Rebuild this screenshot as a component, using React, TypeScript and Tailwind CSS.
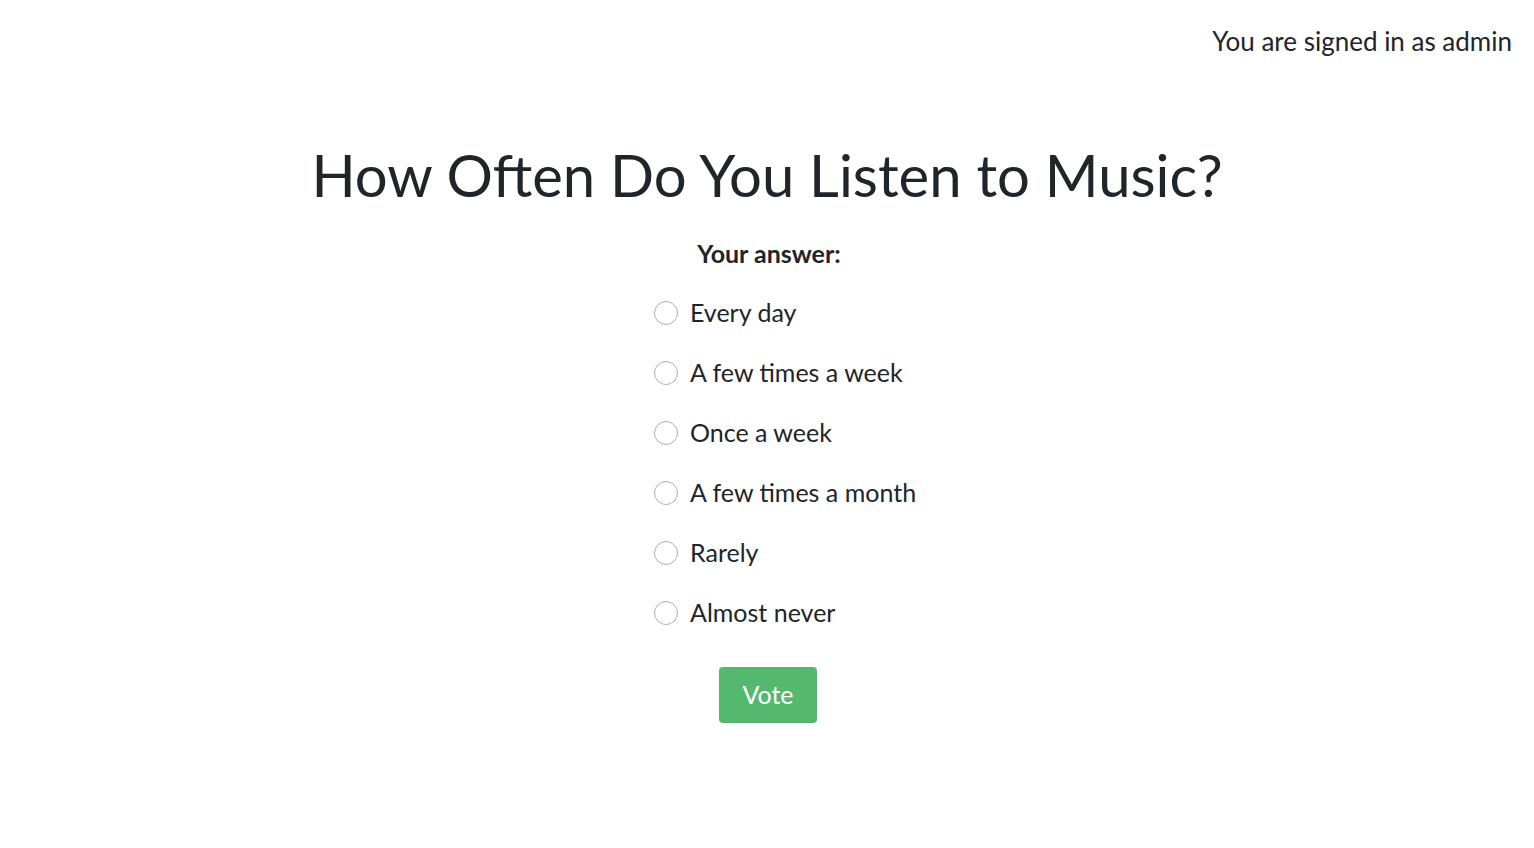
import React from 'react';

const options = ['Every day', 'A few times a week', 'Once a week', 'A few times a month', 'Rarely', 'Almost never'];

export default function App() {
  return (
    <div className="min-h-screen bg-white text-[#212529]" style={{fontFamily: 'Lato, "Noto Sans", sans-serif'}}>
      <div className="flex justify-end pr-[22px] pt-[23px] text-[26px] leading-[36px]">
        You are signed in as admin
      </div>
      <div className="flex flex-col items-center pt-[78px]">
        <h1 className="text-[58px] leading-[76px] font-normal">How Often Do You Listen to Music?</h1>
        <form className="mt-[24px] flex flex-col items-center">
          <div className="text-[25px] font-bold leading-[32px] pl-[4px]">Your answer:</div>
          <div className="mt-[14px] w-[228px] flex flex-col pl-[1px]">
            {options.map((o) => (
              <label key={o} className="flex items-center h-[60px] whitespace-nowrap text-[25px]">
                <span className="w-[24px] h-[24px] rounded-full border border-[#adadad] shrink-0" />
                <span className="ml-[12px]">{o}</span>
              </label>
            ))}
          </div>
          <button type="button" className="mt-[24px] w-[98px] h-[56px] rounded-[4px] bg-[#54b96f] text-white text-[25px] ml-[2px]">
            Vote
          </button>
        </form>
      </div>
    </div>
  );
}
